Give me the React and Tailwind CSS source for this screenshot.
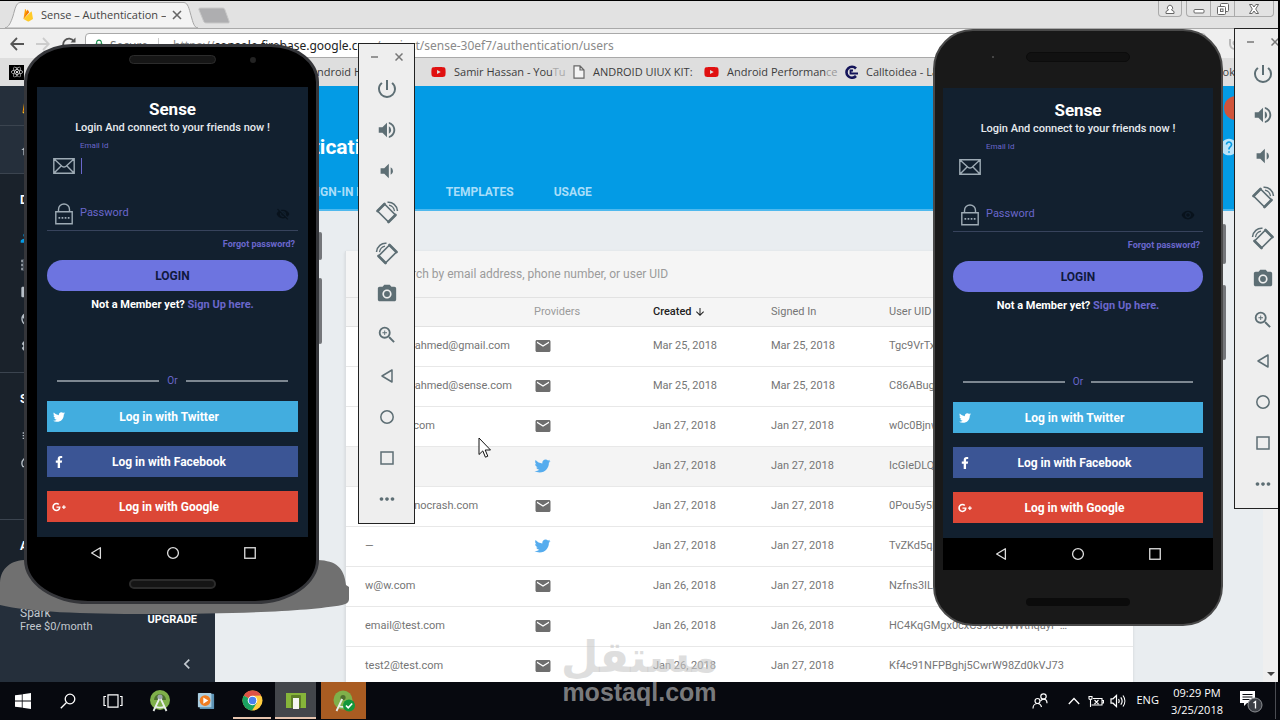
import React from "react";
import {
  MdPowerSettingsNew,
  MdVolumeUp,
  MdVolumeDown,
  MdCameraAlt,
  MdZoomIn,
  MdMoreHoriz,
  MdEmail,
  MdArrowDownward,
  MdVisibility,
  MdVisibilityOff,
  MdHelp,
  MdChevronLeft,
  MdPeople,
  MdStorage,
  MdFolder,
  MdPublic,
  MdSettings,
  MdHome,
  MdBugReport,
  MdSpeed,
  MdLock,
} from "react-icons/md";
import { FaTwitter, FaFacebookF, FaGooglePlusG, FaReact, FaYoutube } from "react-icons/fa";

/* ---------- drawings ---------- */

function FirebaseLogo({ className }) {
  return (
    <svg viewBox="0 0 24 28" className={className} aria-hidden="true">
      <path d="M3 22 6 2.500c.1-.6.8-.7 1.100-.2L10.500 8.500z" fill="#ffa000" />
      <path d="M3 22 14.500 8.500 11.800 4c-.3-.5-.9-.5-1.100 0z" fill="#f57c00" />
      <path d="M3 22 18.500 7c.3-.3.9-.1 1 .3L22 22l-8.500 5c-.5.300-1.100.300-1.600 0z" fill="#ffca28" />
    </svg>
  );
}

function RotateRight({ className }) {
  return (
    <svg viewBox="0 0 24 24" className={className} fill="none" stroke="currentColor" aria-hidden="true">
      <path d="M9.500 4 2.500 11 13.500 22 20.500 15z" strokeWidth="1.700" strokeLinejoin="round" />
      <path d="M2.500 11l7-7M13.500 22l7-7" strokeWidth="2.600" strokeLinecap="round" />
      <path d="M12.500 2.300c5-.5 9.500 3.200 10 8.700" strokeWidth="1.500" />
      <path d="M14 5.200c3 .6 5 2.800 5.500 6" strokeWidth="1.200" />
    </svg>
  );
}

function RotateLeft({ className }) {
  return (
    <svg viewBox="0 0 24 24" className={className} fill="none" stroke="currentColor" aria-hidden="true">
      <path d="m14.500 4 7 7-11 11-7-7z" strokeWidth="1.700" strokeLinejoin="round" />
      <path d="m21.500 11-7-7M10.500 22l-7-7" strokeWidth="2.600" strokeLinecap="round" />
      <path d="M11.500 2.300c-5-.5-9.500 3.200-10 8.700" strokeWidth="1.500" />
      <path d="M10 5.200c-3 .6-5 2.800-5.500 6" strokeWidth="1.200" />
    </svg>
  );
}

function BackShape({ className }) {
  return (
    <svg viewBox="0 0 16 16" className={className} fill="none" stroke="currentColor" strokeWidth="1.500" aria-hidden="true">
      <path d="M13 2v12L3 8z" strokeLinejoin="round" />
    </svg>
  );
}

function HomeShape({ className }) {
  return (
    <svg viewBox="0 0 16 16" className={className} fill="none" stroke="currentColor" strokeWidth="1.500" aria-hidden="true">
      <circle cx="8" cy="8" r="6.200" />
    </svg>
  );
}

function OverviewShape({ className }) {
  return (
    <svg viewBox="0 0 16 16" className={className} fill="none" stroke="currentColor" strokeWidth="1.500" aria-hidden="true">
      <rect x="2" y="2" width="12" height="12" />
    </svg>
  );
}

function EnvelopeOutline() {
  return (
    <svg viewBox="0 0 22 16" className="h-4 w-[22px] shrink-0 text-[#9eabb5]" fill="none" stroke="currentColor" strokeWidth="1.400" aria-hidden="true">
      <path d="M.8.8h20.400v14.400H.8zM.8.8l8.200 7.400c1.200 1 2.800 1 4 0L21.200.8M.8 15.200l7.500-7.400M21.200 15.200l-7.500-7.400" />
    </svg>
  );
}

function LockOutline() {
  return (
    <svg viewBox="0 0 22 22" className="h-[22px] w-[22px] shrink-0 text-[#9eabb5]" fill="none" stroke="currentColor" strokeWidth="1.400" aria-hidden="true">
      <path d="M2.800 8.800h16.400v12H2.800zM5.500 8.800V6.500a5.500 5.500 0 0 1 11 0v2.300" />
      <path d="M5.500 14.800h11" strokeWidth="1.800" strokeDasharray="1.700 1.400" />
    </svg>
  );
}

function AndroidStudio({ className }) {
  return (
    <svg viewBox="0 0 22 22" className={className} aria-hidden="true">
      <circle cx="11" cy="10" r="10" fill="#7fb04a" />
      <path d="M5 10a6 6 0 0 1 12 0z" fill="#4d6f2e" />
      <circle cx="11" cy="7" r="2.600" fill="#9aa5a8" />
      <path d="M10.200 9 4.500 21M11.800 9l5.700 12M6.500 16.500c3 1.500 6 1.500 9 0" stroke="#e9eeea" strokeWidth="1.800" fill="none" />
    </svg>
  );
}

/* ---------- browser ---------- */

function TabStrip() {
  return (
    <div className="flex h-[27px] shrink-0 items-end bg-[#e2e2e2] pl-[5px]">
      <div className="relative flex h-[26px] w-[193px] items-center pl-4 pr-3">
        <svg viewBox="0 0 193 26" preserveAspectRatio="none" className="absolute inset-0 h-full w-full" aria-hidden="true">
          <path d="M0 26C4 25 6 20 8 14 10 7 11 1 15 .5h164c4 .5 5 6 7 13 2 7 3 12 7 12.500z" fill="#f3f3f3" stroke="#a5a5a5" />
        </svg>
        <FirebaseLogo className="relative h-[14px] w-[14px]" />
        <span className="relative ml-1.5 w-[125px] overflow-hidden whitespace-nowrap text-[11px] text-[#444]">Sense – Authentication –</span>
        <button type="button" aria-label="Close tab" className="relative ml-1.5 text-[#666]">
          <svg viewBox="0 0 10 10" className="h-2.5 w-2.5" stroke="currentColor" strokeWidth="1.600" aria-hidden="true">
            <path d="M1 1l8 8M9 1L1 9" />
          </svg>
        </button>
      </div>
      <button type="button" aria-label="New tab" className="mb-1">
        <svg viewBox="0 0 32 17" className="h-[17px] w-8" aria-hidden="true">
          <path d="M3 1h21c2 0 2.500.5 3 2l4 11c.5 1.500 0 2-1 2H9c-2 0-3-.5-3.500-2L1 3C.5 1.500 1 1 3 1z" fill="#aeaeb0" stroke="#c8c8c8" />
        </svg>
      </button>
      <div className="ml-auto mr-1 flex gap-1 self-start text-[#666]">
        <button type="button" aria-label="Account" className="flex h-4 w-6 items-center justify-center rounded-b border border-t-0 border-[#aaa]">
          <svg viewBox="0 0 12 12" className="h-3 w-3" fill="#fff" stroke="currentColor" aria-hidden="true">
            <path d="M2 10.500v-2L4.500 7a2.600 2.600 0 1 1 3 0L10 8.500v2z" />
          </svg>
        </button>
        <div className="flex h-4 rounded-b border border-t-0 border-[#aaa]">
          <button type="button" aria-label="Minimize" className="flex w-6 items-center justify-center border-r border-[#aaa]">
            <svg viewBox="0 0 12 12" className="h-3 w-3" fill="#fff" stroke="currentColor" aria-hidden="true">
              <rect x="1" y="6.500" width="10" height="3.500" rx="1" />
            </svg>
          </button>
          <button type="button" aria-label="Restore" className="flex w-6 items-center justify-center border-r border-[#aaa]">
            <svg viewBox="0 0 12 12" className="h-3 w-3" fill="#fff" stroke="currentColor" aria-hidden="true">
              <rect x="3.500" y=".5" width="8" height="8" rx="1" />
              <rect x=".5" y="3.500" width="8" height="8" rx="1" />
              <rect x="3.500" y="6" width="2.500" height="2.500" />
            </svg>
          </button>
          <button type="button" aria-label="Close" className="flex w-[38px] items-center justify-center">
            <svg viewBox="0 0 12 12" className="h-3 w-3" fill="#fff" stroke="currentColor" aria-hidden="true">
              <path d="M1.500 1.500h2.700L6 4l1.800-2.500h2.700L7.700 6l2.800 4.500H7.800L6 8l-1.800 2.500H1.500L4.300 6z" />
            </svg>
          </button>
        </div>
      </div>
    </div>
  );
}

function AddressBar() {
  return (
    <div className="flex h-[30px] shrink-0 items-center border-t border-[#a9a9a9] bg-[#efefef] pl-2.5">
      <button type="button" aria-label="Back" className="text-[#555]">
        <svg viewBox="0 0 14 14" className="h-3.5 w-3.5" fill="none" stroke="currentColor" strokeWidth="1.800" aria-hidden="true">
          <path d="M14 7H1.500M7 1 1.200 7 7 13" />
        </svg>
      </button>
      <button type="button" aria-label="Forward" className="ml-3 text-[#ccc]">
        <svg viewBox="0 0 14 14" className="h-3.5 w-3.5" fill="none" stroke="currentColor" strokeWidth="1.800" aria-hidden="true">
          <path d="M0 7h12.500M7 1l5.800 6L7 13" />
        </svg>
      </button>
      <button type="button" aria-label="Reload" className="ml-3 text-[#555]">
        <svg viewBox="0 0 14 14" className="h-3.5 w-3.5" fill="none" stroke="currentColor" strokeWidth="1.800" aria-hidden="true">
          <path d="M12 4.500A5.800 5.800 0 1 0 12.800 8" />
          <path d="M13.500.5v5h-5z" fill="currentColor" stroke="none" />
        </svg>
      </button>
      <div className="ml-[9px] mt-1 flex h-[25px] flex-1 items-center whitespace-nowrap rounded-sm border border-[#a9a9a9] bg-white pl-1.5 font-[Noto_Sans,sans-serif] text-xs text-[#8a8a8a]">
        <MdLock className="h-3.5 w-3.5 text-[#1a8a4a]" />
        <span className="ml-1 w-[48px] overflow-hidden text-[#777]">Secure</span>
        <span className="mr-3.5 h-4 w-px bg-[#ccc]" />
        <a href="#users">
          https://<span className="text-[#222]">console.firebase.google.com</span>/project/sense-30ef7/authentication/users
        </a>
      </div>
      <button type="button" aria-label="Extension" className="ml-[22px] mr-9 text-[#b8b8b8]">
        <svg viewBox="0 0 14 14" className="h-3.5 w-3.5" fill="none" stroke="currentColor" strokeWidth="2" aria-hidden="true">
          <path d="M2 2v5a5 5 0 0 0 10 0V2" />
          <circle cx="7" cy="6" r="1.500" />
        </svg>
      </button>
    </div>
  );
}

function Bookmark({ icon, label, className }) {
  return (
    <a href="#bookmark" className={"flex shrink-0 items-center gap-2 whitespace-nowrap " + className}>
      {icon}
      <span>{label}</span>
    </a>
  );
}

const YouTube = () => <FaYoutube className="h-4 w-[15px] shrink-0 text-[#e01010]" />;
const PageIcon = () => (
  <svg viewBox="0 0 12 14" className="h-3.5 w-3 shrink-0" fill="#f4f4f4" stroke="#666" strokeWidth="1.200" aria-hidden="true">
    <path d="M1 .8h6L11 5v8.200H1zM7 .8V5h4" />
  </svg>
);

function BookmarksBar() {
  return (
    <nav aria-label="Bookmarks" className="flex h-7 shrink-0 items-center overflow-hidden bg-[#dedede] pl-[9px] text-[11px] text-[#3c3c3c]">
      <a href="#react" aria-label="React" className="flex h-[15px] w-[15px] shrink-0 items-center justify-center bg-black text-white">
        <FaReact className="h-3 w-3" />
      </a>
      <div className="ml-[266px] flex">
        <Bookmark icon={<PageIcon />} label="Android Hive" className="w-[141px]" />
        <Bookmark icon={<YouTube />} label={<>Samir Hassan - You<span className="text-[#aaa]">Tu</span></>} className="w-[142px]" />
        <Bookmark icon={<PageIcon />} label="ANDROID UIUX KIT:" className="w-[131px]" />
        <Bookmark icon={<YouTube />} label={<>Android Performan<span className="text-[#999]">ce</span></>} className="w-[140px]" />
        <Bookmark
          icon={
            <svg viewBox="0 0 14 14" className="h-3.5 w-3.5 shrink-0" fill="none" stroke="#14145a" strokeWidth="2.600" aria-hidden="true">
              <path d="M12 3.500A5.500 5.500 0 1 0 12 11" />
              <path d="M9 5.500H6.500v3H14" strokeWidth="1.800" />
            </svg>
          }
          label="Calltoidea - Landing"
          className="w-[140px]"
        />
      </div>
      <a href="#facebook" className="ml-auto mr-[43px]">Facebook</a>
    </nav>
  );
}

function SideItem({ icon: Icon, label, active }) {
  return (
    <a href={"#" + label} className={"flex h-[27px] items-center gap-3 pl-5 " + (active ? "text-[#039be5]" : "text-[#b8c0c8]")}>
      <Icon className="h-4 w-4" />
      {label}
    </a>
  );
}

function Sidebar() {
  return (
    <aside className="flex w-[215px] shrink-0 flex-col bg-[#1a222b] text-xs text-white">
      <div className="flex h-10 shrink-0 items-center gap-2 border-b border-[#3b444f] bg-[#252f3b] pl-5">
        <FirebaseLogo className="h-6 w-5" />
        Firebase
      </div>
      <div className="flex h-12 shrink-0 items-center border-b border-[#3b444f] bg-[#252f3b]">
        <SideItem icon={MdHome} label="Project Overview" />
      </div>
      <div className="h-[199px] shrink-0 border-b border-[#3b444f] pt-4">
        <h2 className="mb-3.5 h-5 pl-5 text-xs font-bold leading-5">DEVELOP</h2>
        <SideItem icon={MdPeople} label="Authentication" active />
        <SideItem icon={MdStorage} label="Database" />
        <SideItem icon={MdFolder} label="Storage" />
        <SideItem icon={MdPublic} label="Hosting" />
        <SideItem icon={MdSettings} label="Functions" />
      </div>
      <div className="h-[147px] shrink-0 border-b border-[#3b444f] pt-4">
        <h2 className="mb-3 h-5 pl-5 text-xs font-bold leading-5">STABILITY</h2>
        <SideItem icon={MdBugReport} label="Crashlytics" />
        <SideItem icon={MdSpeed} label="Performance" />
      </div>
      <h2 className="pt-4 pl-5 text-xs font-bold leading-5">ANALYTICS</h2>
      <div className="mt-auto flex h-[90px] shrink-0 flex-col bg-[#252f3b] pl-5 pr-[18px] pt-3.5">
        <div className="flex items-center justify-between">
          <p className="text-[11px] leading-[14px] text-[#c3c9cf]">
            <span className="block text-xs leading-[14px]">Spark</span>
            Free $0/month
          </p>
          <a href="#upgrade" className="text-[11px] font-bold">UPGRADE</a>
        </div>
        <button type="button" aria-label="Collapse" className="mt-5 self-end text-[#c3c9cf]">
          <MdChevronLeft className="h-5 w-5" />
        </button>
      </div>
    </aside>
  );
}

const users = [
  ["mohamedahmed@gmail.com", "email", "Mar 25, 2018", "Mar 25, 2018", "Tgc9VrTxYbQmP4kd8sLw2nZaF1u2"],
  ["mohamedahmed@sense.com", "email", "Mar 25, 2018", "Mar 25, 2018", "C86ABugR1hVtq5Wc7xKeN0yPz3d2"],
  ["demo@w.com", "email", "Jan 27, 2018", "Jan 27, 2018", "w0c0BjnwTtS9vE3mQ6hLr8uXk1f2"],
  ["–", "twitter", "Jan 27, 2018", "Jan 27, 2018", "IcGIeDLQp7aYz2Rk4nVb9sWm5Tj1"],
  ["admin@innocrash.com", "email", "Jan 27, 2018", "Jan 27, 2018", "0Pou5y5hGdNx3Kc8tQe1WvZr7Sm2"],
  ["—", "twitter", "Jan 27, 2018", "Jan 27, 2018", "TvZKd5qXw9Rb2LmY6uHc0PfGs4e1"],
  ["w@w.com", "email", "Jan 26, 2018", "Jan 27, 2018", "Nzfns3ILa8Vt5QkDy1WxRb7cMh02"],
  ["email@test.com", "email", "Jan 26, 2018", "Jan 26, 2018", "HC4KqGMgx0cxCs9lC5WWthqayF …"],
  ["test2@test.com", "email", "Jan 26, 2018", "Jan 27, 2018", "Kf4c91NFPBghj5CwrW98Zd0kVJ73"],
];

function UsersCard() {
  return (
    <section className="mx-[130px] mt-10 border-l border-[#dcdfe2] bg-white shadow">
      <div className="flex h-[47px] items-center border-b border-[#e2e2e2] bg-[#f5f5f5] pl-[46px]">
        <input
          type="text"
          aria-label="Search users"
          placeholder="Search by email address, phone number, or user UID"
          className="w-full bg-transparent text-xs text-[#555] outline-none placeholder:text-[#9b9b9b]"
        />
      </div>
      <table className="w-full table-fixed text-left text-[11px] text-[#757575]">
        <thead>
          <tr className="h-7 border-b border-[#e2e2e2] bg-[#f5f5f5]">
            <th className="w-[188px] pl-[19px] font-normal">Identifier</th>
            <th className="w-[119px] font-normal text-[#9b9b9b]">Providers</th>
            <th className="w-[118px] font-medium text-[#222]">
              <span className="flex items-center">
                Created
                <MdArrowDownward className="ml-0.5 h-3 w-3" />
              </span>
            </th>
            <th className="w-[118px] font-normal">Signed In</th>
            <th className="font-normal">User UID</th>
          </tr>
        </thead>
        <tbody>
          {users.map(([id, provider, created, signed, uid], i) => (
            <tr key={uid} className={"h-10 border-b border-[#e8e8e8] whitespace-nowrap " + (i === 3 ? "bg-[#f4f4f4]" : "")}>
              <td className="pl-[19px]">{id}</td>
              <td>
                {provider === "email" ? (
                  <MdEmail className="h-[18px] w-[18px] text-[#6e6e6e]" />
                ) : (
                  <FaTwitter className="h-4 w-[17px] text-[#55acee]" />
                )}
              </td>
              <td>{created}</td>
              <td>{signed}</td>
              <td>{uid}</td>
            </tr>
          ))}
        </tbody>
      </table>
    </section>
  );
}

function Console() {
  return (
    <div className="flex min-h-0 flex-1 overflow-hidden font-[Roboto,sans-serif]">
      <Sidebar />
      <main className="flex min-w-0 flex-1 flex-col overflow-hidden bg-[#e9edf0]">
        <header className="flex h-[125px] shrink-0 flex-col border-b-2 border-[#4fb9ee] bg-[#039be5]">
          <div className="flex h-11 shrink-0 items-center justify-end">
            <span className="mr-[15px] h-6 w-6 rounded-full bg-[#d1543a]" />
          </div>
          <div className="flex items-center justify-between pl-[30px]">
            <h1 className="text-[21px] font-bold leading-[34px] text-white">Authentication</h1>
            <MdHelp className="mr-6 h-5 w-5 text-[#b8e3fa]" />
          </div>
          <nav aria-label="Sections" className="mt-5 flex gap-10 pl-[17px] text-xs font-bold text-[#a9def9]">
            <a href="#users" className="text-white">USERS</a>
            <a href="#method">SIGN-IN METHOD</a>
            <a href="#templates">TEMPLATES</a>
            <a href="#usage">USAGE</a>
          </nav>
        </header>
        <UsersCard />
      </main>
      <div className="flex w-[15px] shrink-0 flex-col items-center justify-end bg-[#efefef] pb-1.5">
        <span className="h-0 w-0 border-x-4 border-t-4 border-x-transparent border-t-[#444]" />
      </div>
    </div>
  );
}

/* ---------- emulator ---------- */

function SocialButton({ icon: Icon, label, color }) {
  return (
    <button type="button" className={"flex h-[31px] w-full items-center pl-[5px] text-xs font-bold text-white " + color}>
      <Icon className="h-3 w-3.5" />
      <span className="flex-1 pr-[26px] text-center">{label}</span>
    </button>
  );
}

function LoginScreen({ name, focused }) {
  const Eye = focused ? MdVisibilityOff : MdVisibility;
  return (
    <div>
      <form className="bg-[#12202f] px-2.5 pt-3 pb-[15px] text-xs" onSubmit={(e) => e.preventDefault()}>
        <h2 className="text-center text-[17px] font-bold leading-5 text-white">Sense</h2>
        <p className="text-center text-[11px] font-medium leading-[17px] text-[#e6eaee]">Login And connect to your friends now !</p>
        <label htmlFor={name + "-email"} className="mt-0.5 block pl-[33px] text-[8px] leading-4 text-[#6a67cc]">
          Email Id
        </label>
        <div className="flex h-[23px] items-center pl-1.5">
          <EnvelopeOutline />
          {focused && <span className="ml-1.5 h-4 w-px bg-[#6a67cc]" />}
          <input id={name + "-email"} type="email" className="h-5 min-w-0 flex-1 bg-transparent text-white outline-none" />
        </div>
        <div className="mt-5 flex h-[34px] items-center border-b border-[#37435c] pl-1.5 pr-2">
          <LockOutline />
          <input
            type="password"
            aria-label="Password"
            placeholder="Password"
            className="ml-[5px] min-w-0 flex-1 bg-transparent text-[11px] text-white outline-none placeholder:text-[#6a67cc]"
          />
          <Eye className="h-3.5 w-3.5 text-[#08121c]" />
        </div>
        <a href="#forgot" className="mt-[5px] block pr-[3px] text-right text-[9px] font-bold leading-4 text-[#6a67cc]">
          Forgot password?
        </a>
        <button type="submit" className="mt-2 h-[31px] w-full rounded-full bg-[#6d74e0] font-bold text-[#10193d]">
          LOGIN
        </button>
        <p className="mt-1.5 text-center text-[11px] font-bold leading-4 text-white">
          Not a Member yet? <a href="#signup" className="text-[#6a67cc]">Sign Up here.</a>
        </p>
        <div className="mt-[60px] flex h-4 items-center gap-2 px-2.5 text-[10px] text-[#6a67cc]">
          <span className="h-0.5 flex-1 bg-[#7d8791]" />
          Or
          <span className="h-0.5 flex-1 bg-[#7d8791]" />
        </div>
        <div className="mt-3 flex flex-col gap-[14px]">
          <SocialButton icon={FaTwitter} label="Log in with Twitter" color="bg-[#42addf]" />
          <SocialButton icon={FaFacebookF} label="Log in with Facebook" color="bg-[#3b5595]" />
          <SocialButton icon={FaGooglePlusG} label="Log in with Google" color="bg-[#dc4736]" />
        </div>
      </form>
      <div className="flex h-8 items-center justify-around bg-black px-5 text-[#ddd]">
        <BackShape className="h-3.5 w-3.5" />
        <HomeShape className="h-3.5 w-3.5" />
        <OverviewShape className="h-3.5 w-3.5" />
      </div>
    </div>
  );
}

function EmulatorButton({ label, children }) {
  return (
    <button type="button" aria-label={label} className="flex h-[41px] w-full items-center justify-center">
      {children}
    </button>
  );
}

function EmulatorToolbar() {
  return (
    <div className="w-[57px] border border-[#222] bg-[#eeeeee] pb-1 text-[#5d6e74]">
      <div className="flex h-6 items-center justify-center gap-4 pt-0.5 text-[#777]">
        <svg viewBox="0 0 8 8" className="h-2 w-2" stroke="currentColor" strokeWidth="1.500" aria-hidden="true">
          <path d="M0 4h7" />
        </svg>
        <svg viewBox="0 0 8 8" className="h-2 w-2" stroke="currentColor" strokeWidth="1.500" aria-hidden="true">
          <path d="M.5.5l7 7M7.500.5l-7 7" />
        </svg>
      </div>
      <EmulatorButton label="Power"><MdPowerSettingsNew className="h-6 w-6" /></EmulatorButton>
      <EmulatorButton label="Volume up"><MdVolumeUp className="h-[22px] w-[22px]" /></EmulatorButton>
      <EmulatorButton label="Volume down"><MdVolumeDown className="h-[22px] w-[22px]" /></EmulatorButton>
      <EmulatorButton label="Rotate right"><RotateRight className="h-6 w-6" /></EmulatorButton>
      <EmulatorButton label="Rotate left"><RotateLeft className="h-6 w-6" /></EmulatorButton>
      <EmulatorButton label="Screenshot"><MdCameraAlt className="h-[22px] w-[22px]" /></EmulatorButton>
      <EmulatorButton label="Zoom"><MdZoomIn className="h-[22px] w-[22px]" /></EmulatorButton>
      <EmulatorButton label="Back"><BackShape className="h-4 w-4" /></EmulatorButton>
      <EmulatorButton label="Home"><HomeShape className="h-4 w-4" /></EmulatorButton>
      <EmulatorButton label="Overview"><OverviewShape className="h-4 w-4" /></EmulatorButton>
      <EmulatorButton label="More"><MdMoreHoriz className="h-[22px] w-[22px]" /></EmulatorButton>
    </div>
  );
}

/* ---------- taskbar ---------- */

function Taskbar() {
  return (
    <footer className="flex h-[38px] shrink-0 items-stretch bg-[#07090f] pb-px text-white">
      <button type="button" aria-label="Start" className="flex w-[45px] items-center justify-center">
        <svg viewBox="0 0 16 16" className="h-4 w-4" fill="currentColor" aria-hidden="true">
          <path d="M0 2.300 6.800 1.400v6.200H0zM7.600 1.300 16 0v7.600H7.600zM0 8.400h6.800v6.200L0 13.700zM7.600 8.400H16V16l-8.400-1.300z" />
        </svg>
      </button>
      <button type="button" aria-label="Search" className="flex w-[45px] items-center justify-center">
        <svg viewBox="0 0 16 16" className="h-4 w-4" fill="none" stroke="currentColor" strokeWidth="1.300" aria-hidden="true">
          <circle cx="10" cy="6" r="4.800" />
          <path d="M6.500 9.500.8 15.200" />
        </svg>
      </button>
      <button type="button" aria-label="Task view" className="flex w-[45px] items-center justify-center">
        <svg viewBox="0 0 20 14" className="h-3.5 w-5" fill="none" stroke="currentColor" strokeWidth="1.200" aria-hidden="true">
          <path d="M5 .8h10v12.400H5zM3 2.500H1v9h2M17 2.500h2v9h-2" />
        </svg>
      </button>
      <button type="button" aria-label="Android Studio" className="ml-0.5 flex w-[46px] items-center justify-center">
        <AndroidStudio className="h-[22px] w-[22px]" />
      </button>
      <button type="button" aria-label="Media Player" className="flex w-[46px] items-center justify-center">
        <svg viewBox="0 0 20 20" className="h-[18px] w-5" aria-hidden="true">
          <rect x="3" y="2" width="16" height="17" rx="1" fill="#5d93b5" />
          <rect x="1" y="1" width="15" height="16" rx="1" fill="#a9cde0" />
          <circle cx="9" cy="9.500" r="6" fill="#ef7d22" />
          <path d="M7 6v7l5.500-3.500z" fill="#fff" />
        </svg>
      </button>
      <button type="button" aria-label="Chrome" className="flex w-[46px] items-center justify-center px-1">
        <span className="flex h-full w-full items-center justify-center border-b-2 border-[#e6c4ae] pt-0.5">
          <svg viewBox="0 0 22 22" className="h-[21px] w-[21px]" aria-hidden="true">
            <circle cx="11" cy="11" r="10.500" fill="#ffcd40" />
            <path d="M11 11 1.900 5.750A10.500 10.500 0 0 1 20.100 5.750L11 6z" fill="#de5246" />
            <path d="M1.900 5.750A10.500 10.500 0 0 0 10.500 21.500L15.500 13.500 11 11z" fill="#1aa260" />
            <circle cx="11" cy="11" r="5" fill="#fff" />
            <circle cx="11" cy="11" r="4" fill="#4a80ee" />
          </svg>
        </span>
      </button>
      <button type="button" aria-label="Emulator" className="mr-[5px] flex w-[41px] items-center justify-center border-b-2 border-[#e6c4ae] bg-[#43464b] pt-0.5">
        <svg viewBox="0 0 22 18" className="h-[18px] w-[22px]" aria-hidden="true">
          <rect x="1" y="1" width="20" height="15" fill="#86b53a" />
          <rect x="6" y="3" width="10" height="13" rx="1" fill="#5d7f28" />
          <rect x="8" y="6" width="6" height="11" fill="#f4f6f2" />
        </svg>
      </button>
      <button type="button" aria-label="Android Studio project" className="flex w-[45px] items-center justify-center bg-[#a95c22]">
        <svg viewBox="0 0 24 22" className="h-[22px] w-6" aria-hidden="true">
          <circle cx="11" cy="10" r="9.500" fill="#7fb04a" />
          <circle cx="11" cy="7.500" r="2.600" fill="#4d6f2e" />
          <path d="M10.200 9 4.500 21M7 16c2 1 4 1.200 6 .6" stroke="#e9eeea" strokeWidth="1.800" fill="none" />
          <circle cx="17" cy="15.500" r="6" fill="#13973a" />
          <path d="m14 15.500 2.200 2.300 4-4.300" stroke="#fff" strokeWidth="1.700" fill="none" />
        </svg>
      </button>
      <div className="ml-auto flex items-center text-[11px] font-[Open_Sans,sans-serif]">
        <svg viewBox="0 0 16 16" className="h-4 w-4" fill="none" stroke="currentColor" strokeWidth="1.200" aria-label="People">
          <circle cx="5.500" cy="8" r="2.500" />
          <path d="M1 15.500c0-3 2-5 4.500-5s3.500 1.500 4 3.500" />
          <circle cx="11.500" cy="3.500" r="2.700" />
          <path d="M8.500 8c1-1.300 2-1.800 3-1.800 2 0 3.500 1.500 3.500 4" />
        </svg>
        <svg viewBox="0 0 12 8" className="ml-5 h-2 w-3" fill="none" stroke="currentColor" strokeWidth="1.300" aria-label="Hidden icons">
          <path d="M.8 7 6 1.500 11.200 7" />
        </svg>
        <svg viewBox="0 0 16 12" className="ml-2 h-3 w-4" fill="none" stroke="currentColor" strokeWidth="1.100" aria-label="Battery">
          <path d="M5 3.500h9V10H3.500M14.500 5.500h1v2.500h-1M6.500 5l4 4M10.500 5l-4 4" />
          <path d="M1 1.500v2.200c0 1 3 1 3 0V1.500zM2.500 4.500V12" />
        </svg>
        <svg viewBox="0 0 16 14" className="ml-1.5 h-3.5 w-4" fill="none" stroke="currentColor" strokeWidth="1.200" aria-label="Volume">
          <path d="M1 4.800h2L6.500 1.500v11L3 9.200H1zM8.500 5c.8 1.200.8 2.800 0 4M10.800 3.300c1.600 2.200 1.600 5.200 0 7.400M13 1.500c2.400 3.200 2.400 7.800 0 11" />
        </svg>
        <span className="ml-2.5">ENG</span>
        <p className="ml-3 text-center leading-[17px]">
          09:29 PM
          <br />
          3/25/2018
        </p>
        <button type="button" aria-label="Notifications" className="ml-4 flex items-center">
          <svg viewBox="0 0 24 24" className="h-6 w-6" aria-hidden="true">
            <path d="M1 2h15v12H8l-3 3v-3H1z" fill="#fff" />
            <path d="M3.500 5.500h10M3.500 8h10M3.500 10.500h7" stroke="#07090f" strokeWidth="1.200" />
            <circle cx="16" cy="16" r="7" fill="#3b3e44" stroke="#8b8e92" />
            <path d="m14.500 14 2-1.500v7" stroke="#fff" strokeWidth="1.300" fill="none" />
          </svg>
        </button>
        <span className="ml-3 mr-1 h-[37px] w-px bg-[#4a4c52]" />
      </div>
    </footer>
  );
}

/* ---------- desktop ---------- */

export default function App() {
  return (
    <div className="relative flex h-screen flex-col overflow-hidden bg-black pt-px font-[Roboto,sans-serif]">
      <div className="mr-0.5 flex min-h-0 flex-1 flex-col overflow-hidden font-[Open_Sans,sans-serif]">
        <TabStrip />
        <AddressBar />
        <BookmarksBar />
        <Console />
      </div>
      <Taskbar />

      <div className="pointer-events-none absolute inset-y-0 left-0 right-0.5 overflow-hidden">
        <svg viewBox="0 0 350 56" className="absolute top-[559px] left-0 h-14 w-[350px]" aria-hidden="true">
          <path d="M24 1C8 2 0 12 0 24v22c30 7 80 9 150 9 90 0 160-3 192-9 5-1 7-3 7-6V28l-3-2C344 8 336 2 318 1z" fill="#707070" />
        </svg>
        <div className="absolute top-[232px] left-[318px] h-7 w-1 rounded-sm bg-[#74767a]" />
        <div className="absolute top-[278px] left-[318px] h-[66px] w-1 rounded-sm bg-[#74767a]" />
        <section
          aria-label="Emulator 1"
          className="pointer-events-auto absolute top-11 left-6 w-[295px] rounded-[48px_48px_64px_64px/38px_38px_44px_44px] border-[3px] border-[#35363a] bg-black pr-2 pb-3 pl-2.5"
        >
          <div className="flex h-10 items-start pt-2">
            <span className="ml-[92px] mr-[34px] h-[9px] w-[87px] rounded-full border border-[#2c2c2c] bg-[#161616]" />
            <span className="mt-0.5 h-1.5 w-1.5 rounded-full bg-[#232323]" />
          </div>
          <LoginScreen name="first" focused />
          <div className="mx-auto mt-2.5 h-2.5 w-[87px] rounded-full border-2 border-[#2c2c2c] bg-[#151515]" />
        </section>

        <div className="absolute top-[224px] left-[1222px] h-10 w-1 rounded-sm bg-[#74767a]" />
        <div className="absolute top-[285px] left-[1222px] h-[75px] w-1 rounded-sm bg-[#74767a]" />
        <section
          aria-label="Emulator 2"
          className="pointer-events-auto absolute top-[29px] left-[933px] w-[290px] rounded-[40px] border-2 border-[#4a4a4a] bg-[#191919] px-2 pb-[18px]"
        >
          <div className="flex h-[57px] items-start pt-[21px]">
            <span className="ml-[49px] mt-1 h-0.5 w-0.5 rounded-full bg-[#555]" />
            <span className="ml-8 h-2.5 w-[104px] rounded-full border border-[#0c0c0c] bg-[#111]" />
          </div>
          <LoginScreen name="second" />
          <div className="mx-auto mt-7 h-2 w-[104px] rounded-full bg-[#0b0b0b]" />
        </section>

        <div className="pointer-events-auto absolute top-[43px] left-[358px]">
          <EmulatorToolbar />
        </div>
        <div className="pointer-events-auto absolute top-7 left-[1234px]">
          <EmulatorToolbar />
        </div>

        <svg viewBox="0 0 13 22" className="absolute top-[437px] left-[478px] h-[22px] w-[13px]" aria-hidden="true">
          <path d="M1 1v16.500l3.800-3.600 2.600 6.300 2.400-1-2.600-6.200h5.300z" fill="#fff" stroke="#111" strokeLinejoin="round" />
        </svg>

        <div className="absolute top-[632px] left-[562px] flex w-[155px] flex-col items-center text-[#c8c8c8]/60">
          <span lang="ar" dir="rtl" className="whitespace-nowrap text-[43px] font-bold leading-[50px] font-[DejaVu_Sans,sans-serif]">مستقل</span>
          <span className="text-[25px] font-bold leading-5 font-[Liberation_Sans,sans-serif]">mostaql.com</span>
        </div>
      </div>
    </div>
  );
}
